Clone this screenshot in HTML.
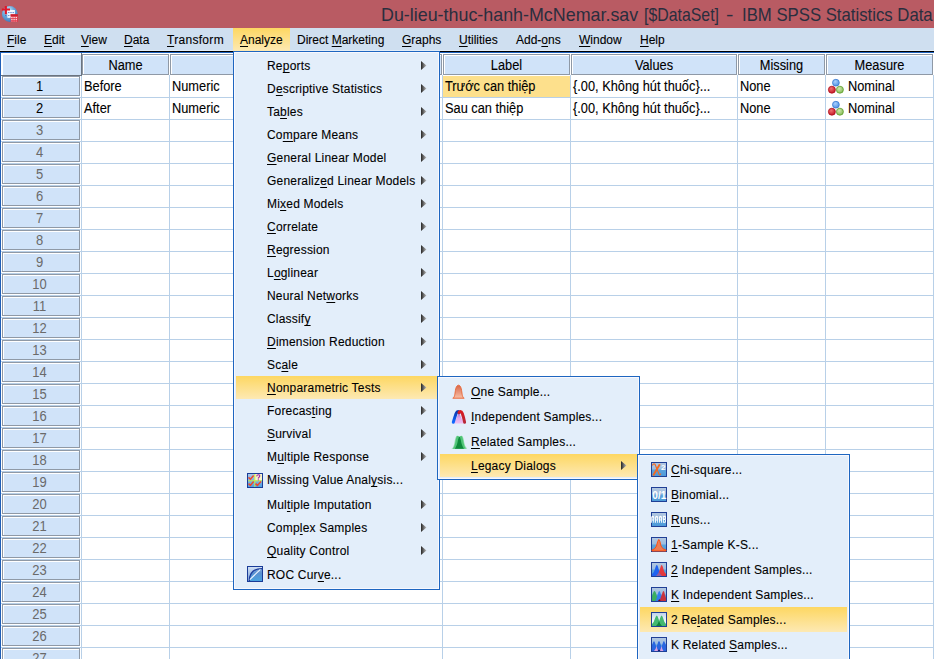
<!DOCTYPE html><html><head><meta charset="utf-8"><style>

*{margin:0;padding:0;box-sizing:border-box}
html,body{width:934px;height:659px;overflow:hidden;background:#fff;font-family:"Liberation Sans", sans-serif;font-size:12px;color:#000}
.abs{position:absolute}
.t{position:absolute;white-space:nowrap;line-height:14px;-webkit-text-stroke:0.1px currentColor}
.d{font-size:12.8px;transform:scaleY(1.1);transform-origin:0 80%}
u{text-decoration:underline;text-decoration-thickness:1px;text-underline-offset:2px}
#title{left:0;top:0;width:934px;height:28px;background:#b95b63}
#menubar{left:0;top:28px;width:934px;height:23px;background:#cfdff0}
.hl{background:linear-gradient(#fdd762,#fde9b3)}
.hdr{position:absolute;background:#d0e3f9;border:1px solid #8f99a6;box-shadow:inset 1px 1px 0 #fff}
.rh{position:absolute;left:2px;width:78px;height:20px;background:#d0e3f9;border:1px solid #8f99a6;box-shadow:inset 1px 1px 0 #fff}
.rn{position:absolute;left:-1px;width:75px;text-align:center;top:3px;line-height:14px;font-size:13px;transform:scaleY(1.12);transform-origin:50% 80%}
.gh{position:absolute;height:1px;background:#b8d0e8}
.gv{position:absolute;width:1px;background:#b8d0e8}
.menu{position:absolute;background:#e3eefa;border:1px solid #1e66c0;box-shadow:inset 1px 1px 0 #f8f8fe,inset -1px -1px 0 #f8f8fe}
.arr{position:absolute;width:5.5px;height:9px;background:linear-gradient(90deg,#262626,#c8c8c8);clip-path:polygon(0 0,100% 50%,0 100%)}

</style></head><body>
<div id="title" class="abs"></div>
<div class="t" style="left:381px;top:4.5px;font-size:18.6px;line-height:20px;color:#2a2e3e;transform-origin:0 0;-webkit-text-stroke:0;transform:scaleX(0.961)">Du-lieu-thuc-hanh-McNemar.sav</div>
<div class="t" style="left:643.5px;top:4.5px;font-size:18.6px;line-height:20px;color:#2a2e3e;transform-origin:0 0;-webkit-text-stroke:0;transform:scaleX(0.853)">[$DataSet]</div>
<div class="t" style="left:725.5px;top:4.5px;font-size:18.6px;line-height:20px;color:#2a2e3e;transform-origin:0 0;-webkit-text-stroke:0;transform:scaleX(1.2)">-</div>
<div class="t" style="left:742px;top:4.5px;font-size:18.6px;line-height:20px;color:#2a2e3e;transform-origin:0 0;-webkit-text-stroke:0;transform:scaleX(0.9)">IBM SPSS Statistics Data</div>
<svg class="abs" style="left:0;top:0" width="20" height="24" viewBox="0 0 20 24">
<defs><radialGradient id="glb" cx="0.4" cy="0.3" r="0.75"><stop offset="0" stop-color="#e0f6ff"/><stop offset="0.5" stop-color="#6aa8dc"/><stop offset="1" stop-color="#3a74b8"/></radialGradient></defs>
<circle cx="9.8" cy="14" r="7.9" fill="url(#glb)"/>
<rect x="7.4" y="10" width="7.5" height="7.8" fill="#f4f8ff"/>
<path d="M8.2 12.6h1.2M10.4 12.6h1.2M12.6 12.6h1.2M5.2 15.6h1.2M8.2 15.6h1.2" stroke="#2a60c0" stroke-width="0.9"/>
<rect x="10.6" y="14.3" width="7.3" height="7.6" fill="#e03a4c"/>
<rect x="10.6" y="14.3" width="7.3" height="1.6" fill="#c8202e"/>
<g fill="#ffe0e4"><rect x="11.2" y="16.9" width="1.4" height="1.1"/><rect x="13.4" y="16.9" width="1.4" height="1.1"/><rect x="15.6" y="16.9" width="1.4" height="1.1"/>
<rect x="11.2" y="18.8" width="1.4" height="1.1"/><rect x="13.4" y="18.8" width="1.4" height="1.1"/><rect x="15.6" y="18.8" width="1.4" height="1.1"/>
<rect x="11.2" y="20.6" width="1.4" height="0.9" opacity="0.6"/><rect x="13.4" y="20.6" width="1.4" height="0.9" opacity="0.6"/><rect x="15.6" y="20.6" width="1.4" height="0.9" opacity="0.6"/></g>
<path d="M5.85 6v8.3M1.9 9.55h8.1" stroke="#e0182a" stroke-width="2.1"/>
</svg>
<div id="menubar" class="abs"></div>
<div class="abs" style="left:0;top:50px;width:934px;height:1px;background:#e2edf8"></div>
<div class="abs hl" style="left:233px;top:28px;width:57px;height:23px"></div>
<div class="t" style="left:7px;top:33px;color:#000"><u>F</u>ile</div>
<div class="t" style="left:44px;top:33px;color:#000"><u>E</u>dit</div>
<div class="t" style="left:81px;top:33px;color:#000"><u>V</u>iew</div>
<div class="t" style="left:124px;top:33px;color:#000"><u>D</u>ata</div>
<div class="t" style="left:167px;top:33px;color:#000;letter-spacing:0.3px"><u>T</u>ransform</div>
<div class="t" style="left:240px;top:33px;color:#000"><u>A</u>nalyze</div>
<div class="t" style="left:297px;top:33px;color:#000">Direct <u>M</u>arketing</div>
<div class="t" style="left:402px;top:33px;color:#000"><u>G</u>raphs</div>
<div class="t" style="left:459px;top:33px;color:#000"><u>U</u>tilities</div>
<div class="t" style="left:516px;top:33px;color:#000">Add-<u>o</u>ns</div>
<div class="t" style="left:579px;top:33px;color:#000"><u>W</u>indow</div>
<div class="t" style="left:640px;top:33px;color:#000"><u>H</u>elp</div>
<div class="abs" style="left:0;top:51px;width:934px;height:1px;background:#000"></div>
<div class="abs" style="left:0;top:52px;width:934px;height:1px;background:#1f64c0"></div>
<div class="abs" style="left:0;top:52px;width:1px;height:607px;background:#1f5fb8"></div>
<div class="abs" style="left:1px;top:53px;width:80px;height:606px;background:#fff"></div>
<div class="gv" style="left:81px;top:75px;height:584px"></div>
<div class="gv" style="left:169px;top:75px;height:584px"></div>
<div class="gv" style="left:442px;top:75px;height:584px"></div>
<div class="gv" style="left:570px;top:75px;height:584px"></div>
<div class="gv" style="left:737px;top:75px;height:584px"></div>
<div class="gv" style="left:825px;top:75px;height:584px"></div>
<div class="gv" style="left:933px;top:75px;height:584px"></div>
<div class="gh" style="left:1px;top:97px;width:933px"></div>
<div class="gh" style="left:1px;top:119px;width:933px"></div>
<div class="gh" style="left:1px;top:141px;width:933px"></div>
<div class="gh" style="left:1px;top:163px;width:933px"></div>
<div class="gh" style="left:1px;top:185px;width:933px"></div>
<div class="gh" style="left:1px;top:207px;width:933px"></div>
<div class="gh" style="left:1px;top:229px;width:933px"></div>
<div class="gh" style="left:1px;top:251px;width:933px"></div>
<div class="gh" style="left:1px;top:273px;width:933px"></div>
<div class="gh" style="left:1px;top:295px;width:933px"></div>
<div class="gh" style="left:1px;top:317px;width:933px"></div>
<div class="gh" style="left:1px;top:339px;width:933px"></div>
<div class="gh" style="left:1px;top:361px;width:933px"></div>
<div class="gh" style="left:1px;top:383px;width:933px"></div>
<div class="gh" style="left:1px;top:405px;width:933px"></div>
<div class="gh" style="left:1px;top:427px;width:933px"></div>
<div class="gh" style="left:1px;top:449px;width:933px"></div>
<div class="gh" style="left:1px;top:471px;width:933px"></div>
<div class="gh" style="left:1px;top:493px;width:933px"></div>
<div class="gh" style="left:1px;top:515px;width:933px"></div>
<div class="gh" style="left:1px;top:537px;width:933px"></div>
<div class="gh" style="left:1px;top:559px;width:933px"></div>
<div class="gh" style="left:1px;top:581px;width:933px"></div>
<div class="gh" style="left:1px;top:603px;width:933px"></div>
<div class="gh" style="left:1px;top:625px;width:933px"></div>
<div class="gh" style="left:1px;top:647px;width:933px"></div>
<div class="gh" style="left:1px;top:669px;width:933px"></div>
<div class="gh" style="left:1px;top:691px;width:933px"></div>
<div class="abs" style="left:1px;top:53px;width:81px;height:23px;background:#d0e3f9;border-right:1px solid #6b7480;border-bottom:1px solid #6b7480;box-shadow:inset 2px 2px 0 #fff"></div>
<div class="hdr" style="left:82px;top:54px;width:87px;height:21px"><div class="t d" style="left:0;width:85px;text-align:center;top:4px">Name</div></div>
<div class="hdr" style="left:170px;top:54px;width:272px;height:21px"><div class="t d" style="left:0;width:270px;text-align:center;top:4px"></div></div>
<div class="hdr" style="left:443px;top:54px;width:127px;height:21px"><div class="t d" style="left:0;width:125px;text-align:center;top:4px">Label</div></div>
<div class="hdr" style="left:571px;top:54px;width:166px;height:21px"><div class="t d" style="left:0;width:164px;text-align:center;top:4px">Values</div></div>
<div class="hdr" style="left:738px;top:54px;width:87px;height:21px"><div class="t d" style="left:0;width:85px;text-align:center;top:4px">Missing</div></div>
<div class="hdr" style="left:826px;top:54px;width:107px;height:21px"><div class="t d" style="left:0;width:105px;text-align:center;top:4px">Measure</div></div>
<div class="rh" style="top:76px"><div class="rn" style="color:#000">1</div></div>
<div class="rh" style="top:98px"><div class="rn" style="color:#000">2</div></div>
<div class="rh" style="top:120px"><div class="rn" style="color:#6a6a6a">3</div></div>
<div class="rh" style="top:142px"><div class="rn" style="color:#6a6a6a">4</div></div>
<div class="rh" style="top:164px"><div class="rn" style="color:#6a6a6a">5</div></div>
<div class="rh" style="top:186px"><div class="rn" style="color:#6a6a6a">6</div></div>
<div class="rh" style="top:208px"><div class="rn" style="color:#6a6a6a">7</div></div>
<div class="rh" style="top:230px"><div class="rn" style="color:#6a6a6a">8</div></div>
<div class="rh" style="top:252px"><div class="rn" style="color:#6a6a6a">9</div></div>
<div class="rh" style="top:274px"><div class="rn" style="color:#6a6a6a">10</div></div>
<div class="rh" style="top:296px"><div class="rn" style="color:#6a6a6a">11</div></div>
<div class="rh" style="top:318px"><div class="rn" style="color:#6a6a6a">12</div></div>
<div class="rh" style="top:340px"><div class="rn" style="color:#6a6a6a">13</div></div>
<div class="rh" style="top:362px"><div class="rn" style="color:#6a6a6a">14</div></div>
<div class="rh" style="top:384px"><div class="rn" style="color:#6a6a6a">15</div></div>
<div class="rh" style="top:406px"><div class="rn" style="color:#6a6a6a">16</div></div>
<div class="rh" style="top:428px"><div class="rn" style="color:#6a6a6a">17</div></div>
<div class="rh" style="top:450px"><div class="rn" style="color:#6a6a6a">18</div></div>
<div class="rh" style="top:472px"><div class="rn" style="color:#6a6a6a">19</div></div>
<div class="rh" style="top:494px"><div class="rn" style="color:#6a6a6a">20</div></div>
<div class="rh" style="top:516px"><div class="rn" style="color:#6a6a6a">21</div></div>
<div class="rh" style="top:538px"><div class="rn" style="color:#6a6a6a">22</div></div>
<div class="rh" style="top:560px"><div class="rn" style="color:#6a6a6a">23</div></div>
<div class="rh" style="top:582px"><div class="rn" style="color:#6a6a6a">24</div></div>
<div class="rh" style="top:604px"><div class="rn" style="color:#6a6a6a">25</div></div>
<div class="rh" style="top:626px"><div class="rn" style="color:#6a6a6a">26</div></div>
<div class="rh" style="top:648px"><div class="rn" style="color:#6a6a6a">27</div></div>
<div class="abs" style="left:443px;top:76px;width:127px;height:21px;background:#fde08c"></div>
<div class="t d" style="left:84px;top:80px">Before</div>
<div class="t d" style="left:172px;top:80px">Numeric</div>
<div class="t d" style="left:445px;top:80px">Trước can thiệp</div>
<div class="t d" style="left:573px;top:80px">{.00, Không hút thuốc}...</div>
<div class="t d" style="left:740px;top:80px">None</div>
<svg class="abs" style="left:827px;top:78px" width="18" height="16" viewBox="0 0 18 16">
<defs>
<radialGradient id="nb1" cx="0.4" cy="0.35" r="0.7"><stop offset="0" stop-color="#a8d0ff"/><stop offset="1" stop-color="#4a8ee0"/></radialGradient>
<radialGradient id="nr1" cx="0.4" cy="0.35" r="0.7"><stop offset="0" stop-color="#f07070"/><stop offset="1" stop-color="#c01020"/></radialGradient>
<radialGradient id="ng1" cx="0.4" cy="0.35" r="0.7"><stop offset="0" stop-color="#d0e8b0"/><stop offset="1" stop-color="#80b850"/></radialGradient>
</defs>
<circle cx="8.9" cy="4.7" r="3.4" fill="url(#nb1)" stroke="#3a7ad0" stroke-width="0.8"/>
<circle cx="4.9" cy="11.7" r="3.5" fill="url(#nr1)" stroke="#b01020" stroke-width="0.8"/>
<circle cx="12.9" cy="11.7" r="3.5" fill="url(#ng1)" stroke="#60a030" stroke-width="0.8"/>
</svg>
<div class="t d" style="left:848px;top:80px">Nominal</div>
<div class="t d" style="left:84px;top:102px">After</div>
<div class="t d" style="left:172px;top:102px">Numeric</div>
<div class="t d" style="left:445px;top:102px">Sau can thiệp</div>
<div class="t d" style="left:573px;top:102px">{.00, Không hút thuốc}...</div>
<div class="t d" style="left:740px;top:102px">None</div>
<svg class="abs" style="left:827px;top:100px" width="18" height="16" viewBox="0 0 18 16">
<defs>
<radialGradient id="nb2" cx="0.4" cy="0.35" r="0.7"><stop offset="0" stop-color="#a8d0ff"/><stop offset="1" stop-color="#4a8ee0"/></radialGradient>
<radialGradient id="nr2" cx="0.4" cy="0.35" r="0.7"><stop offset="0" stop-color="#f07070"/><stop offset="1" stop-color="#c01020"/></radialGradient>
<radialGradient id="ng2" cx="0.4" cy="0.35" r="0.7"><stop offset="0" stop-color="#d0e8b0"/><stop offset="1" stop-color="#80b850"/></radialGradient>
</defs>
<circle cx="8.9" cy="4.7" r="3.4" fill="url(#nb2)" stroke="#3a7ad0" stroke-width="0.8"/>
<circle cx="4.9" cy="11.7" r="3.5" fill="url(#nr2)" stroke="#b01020" stroke-width="0.8"/>
<circle cx="12.9" cy="11.7" r="3.5" fill="url(#ng2)" stroke="#60a030" stroke-width="0.8"/>
</svg>
<div class="t d" style="left:848px;top:102px">Nominal</div>
<div class="menu" style="left:233px;top:51px;width:207px;height:539px"></div>
<div class="t" style="left:267px;top:59px;color:#000;letter-spacing:0.2px">Re<u>p</u>orts</div>
<div class="arr" style="left:421px;top:61px"></div>
<div class="t" style="left:267px;top:82px;color:#000;letter-spacing:0.2px">D<u>e</u>scriptive Statistics</div>
<div class="arr" style="left:421px;top:84px"></div>
<div class="t" style="left:267px;top:105px;color:#000;letter-spacing:0.2px">Ta<u>b</u>les</div>
<div class="arr" style="left:421px;top:107px"></div>
<div class="t" style="left:267px;top:128px;color:#000;letter-spacing:0.2px">Co<u>m</u>pare Means</div>
<div class="arr" style="left:421px;top:130px"></div>
<div class="t" style="left:267px;top:151px;color:#000;letter-spacing:0.2px"><u>G</u>eneral Linear Model</div>
<div class="arr" style="left:421px;top:153px"></div>
<div class="t" style="left:267px;top:174px;color:#000;letter-spacing:0.2px">Generaliz<u>e</u>d Linear Models</div>
<div class="arr" style="left:421px;top:176px"></div>
<div class="t" style="left:267px;top:197px;color:#000;letter-spacing:0.2px">Mi<u>x</u>ed Models</div>
<div class="arr" style="left:421px;top:199px"></div>
<div class="t" style="left:267px;top:220px;color:#000;letter-spacing:0.2px"><u>C</u>orrelate</div>
<div class="arr" style="left:421px;top:222px"></div>
<div class="t" style="left:267px;top:243px;color:#000;letter-spacing:0.2px"><u>R</u>egression</div>
<div class="arr" style="left:421px;top:245px"></div>
<div class="t" style="left:267px;top:266px;color:#000;letter-spacing:0.2px">L<u>o</u>glinear</div>
<div class="arr" style="left:421px;top:268px"></div>
<div class="t" style="left:267px;top:289px;color:#000;letter-spacing:0.2px">Neural Net<u>w</u>orks</div>
<div class="arr" style="left:421px;top:291px"></div>
<div class="t" style="left:267px;top:312px;color:#000;letter-spacing:0.2px">Classif<u>y</u></div>
<div class="arr" style="left:421px;top:314px"></div>
<div class="t" style="left:267px;top:335px;color:#000;letter-spacing:0.2px"><u>D</u>imension Reduction</div>
<div class="arr" style="left:421px;top:337px"></div>
<div class="t" style="left:267px;top:358px;color:#000;letter-spacing:0.2px">Sc<u>a</u>le</div>
<div class="arr" style="left:421px;top:360px"></div>
<div class="abs hl" style="left:236px;top:376px;width:202px;height:23px"></div>
<div class="t" style="left:267px;top:381px;color:#000;letter-spacing:0.2px"><u>N</u>onparametric Tests</div>
<div class="arr" style="left:421px;top:383px"></div>
<div class="t" style="left:267px;top:404px;color:#000;letter-spacing:0.2px">Forecas<u>t</u>ing</div>
<div class="arr" style="left:421px;top:406px"></div>
<div class="t" style="left:267px;top:427px;color:#000;letter-spacing:0.2px"><u>S</u>urvival</div>
<div class="arr" style="left:421px;top:429px"></div>
<div class="t" style="left:267px;top:450px;color:#000;letter-spacing:0.2px">M<u>u</u>ltiple Response</div>
<div class="arr" style="left:421px;top:452px"></div>
<div class="t" style="left:267px;top:473px;color:#000;letter-spacing:0.2px">Missing Value Anal<u>y</u>sis...</div>
<svg class="abs" style="left:247px;top:473px" width="16" height="15" viewBox="0 0 16 15">
<defs><linearGradient id="mvg" x1="0" y1="0" x2="0" y2="1"><stop offset="0" stop-color="#b0c8e8"/><stop offset="1" stop-color="#4a9ee0"/></linearGradient></defs>
<rect x="0.5" y="0.5" width="15" height="14" fill="url(#mvg)" stroke="#1a3c98"/>
<rect x="7.5" y="1" width="7.5" height="6.5" fill="#f8f6c8"/>
<path d="M1 7.8h14M7.8 1v13" stroke="#c8f040" stroke-width="1"/>
<path d="M1.5 4.4 L3.4 6.2 L6.6 2.4 M1.5 10.6 L3.4 12.4 L6.6 8.6 M8.5 10.6 L10.4 12.4 L14 8.6" stroke="#f04a28" stroke-width="1.5" fill="none"/>
<path d="M9.6 3.3 Q10 1.6 11.5 1.7 Q13 1.9 12.7 3.3 Q12.3 4.3 11.4 4.9 L11.3 5.6" stroke="#a020b0" stroke-width="1.1" fill="none"/>
<circle cx="11.3" cy="6.8" r="0.65" fill="#a020b0"/>
</svg>
<div class="t" style="left:267px;top:498px;color:#000;letter-spacing:0.2px">Mul<u>t</u>iple Imputation</div>
<div class="arr" style="left:421px;top:500px"></div>
<div class="t" style="left:267px;top:521px;color:#000;letter-spacing:0.2px">Comp<u>l</u>ex Samples</div>
<div class="arr" style="left:421px;top:523px"></div>
<div class="t" style="left:267px;top:544px;color:#000;letter-spacing:0.2px"><u>Q</u>uality Control</div>
<div class="arr" style="left:421px;top:546px"></div>
<div class="t" style="left:267px;top:568px;color:#000;letter-spacing:0.2px">ROC Cur<u>v</u>e...</div>
<svg class="abs" style="left:247px;top:566px" width="16" height="16" viewBox="0 0 16 16">
<defs><linearGradient id="rocg" x1="0" y1="0" x2="0" y2="1"><stop offset="0" stop-color="#90b4e0"/><stop offset="0.45" stop-color="#5890d0"/><stop offset="1" stop-color="#48a4e0"/></linearGradient>
<linearGradient id="rocl" x1="0" y1="0" x2="0" y2="1"><stop offset="0" stop-color="#d0e0f4"/><stop offset="1" stop-color="#7aa0d8"/></linearGradient></defs>
<rect x="0.5" y="0.5" width="15" height="15" fill="url(#rocg)" stroke="#1a3c98"/>
<path d="M1 1 H15 V2.6 Q2.4 2.6 2.4 15 H1Z" fill="url(#rocl)"/>
<path d="M2.4 15 Q2.4 2.6 15 2.6" stroke="#1c3c9c" stroke-width="1.3" fill="none"/>
<path d="M2.8 13.6 L13.4 3.4" stroke="#eef4ff" stroke-width="1.1" fill="none"/>
</svg>
<div class="menu" style="left:437px;top:376px;width:203px;height:104px"></div>
<div class="t" style="left:471px;top:385px;color:#000;letter-spacing:0.2px"><u>O</u>ne Sample...</div>
<div class="t" style="left:471px;top:410px;color:#000;letter-spacing:0.2px"><u>I</u>ndependent Samples...</div>
<div class="t" style="left:471px;top:435px;color:#000;letter-spacing:0.2px"><u>R</u>elated Samples...</div>
<div class="abs hl" style="left:440px;top:454px;width:197px;height:23px"></div>
<div class="arr" style="left:621px;top:461px"></div>
<div class="t" style="left:471px;top:459px;color:#000;letter-spacing:0.2px"><u>L</u>egacy Dialogs</div>
<svg class="abs" style="left:452px;top:384px" width="14" height="15" viewBox="0 0 14 15">
<defs><linearGradient id="os" x1="0" y1="0" x2="0" y2="1"><stop offset="0" stop-color="#d86648"/><stop offset="1" stop-color="#f8c0a8"/></linearGradient></defs>
<path d="M0.8 14.2 C2.6 13.8 2.9 10 3.4 6.6 C3.9 3 5 1.2 6.5 1.2 C8 1.2 9.1 3 9.6 6.6 C10.1 10 10.4 13.8 12.2 14.2 Z" fill="url(#os)" stroke="#ea6a3c" stroke-width="1"/>
</svg>
<svg class="abs" style="left:451px;top:410px" width="16" height="15" viewBox="0 0 16 15">
<defs><linearGradient id="ipk" x1="0" y1="0" x2="0" y2="1"><stop offset="0" stop-color="#a060c8"/><stop offset="0.5" stop-color="#e0a8ec"/><stop offset="1" stop-color="#f0c0f0"/></linearGradient>
<linearGradient id="ibl" x1="0" y1="0" x2="0" y2="1"><stop offset="0" stop-color="#0a38b0"/><stop offset="1" stop-color="#1068ff"/></linearGradient>
<linearGradient id="ird" x1="0" y1="0" x2="0" y2="1"><stop offset="0" stop-color="#d81c24"/><stop offset="1" stop-color="#b82838"/></linearGradient></defs>
<path d="M3 13.6 Q5.5 8 7.9 2.5 Q10.3 8 13 13.6Z" fill="url(#ipk)"/>
<path d="M2.3 12.2 Q3.9 7 5.1 3.6 Q5.9 1.6 7.1 1.6 Q7.7 1.6 8 2.6" stroke="url(#ibl)" stroke-width="3" fill="none" stroke-linecap="round"/>
<path d="M8 2.6 Q8.4 1.6 9.3 1.6 Q10.6 1.6 11.3 3.6 Q12.5 7 13.6 12.2" stroke="url(#ird)" stroke-width="3" fill="none" stroke-linecap="round"/>
</svg>
<svg class="abs" style="left:451px;top:435px" width="17" height="14" viewBox="0 0 17 14">
<path d="M0.3 13.8 Q2.5 13 3.4 8 Q4.4 1.2 6 0.8 Q7.5 0.6 8.4 1.8 Q9.3 0.6 10.8 0.8 Q12.4 1.2 13.3 8 Q14 12 16.2 13.8 Z" fill="#90dcaa"/>
<path d="M1.6 13.8 Q3.6 12 4.4 7 Q5.3 1.5 6.3 1.1 Q7.6 1.1 8.4 2.4 Q9.2 1.1 10.5 1.1 Q11.5 1.5 12.4 7 Q13.2 12 14.8 13.8Z" fill="#50c478"/>
<path d="M3.8 13.8 Q6 11 7 5 Q7.8 1.5 8.4 1.5 Q9 1.5 9.8 5 Q10.8 11 13 13.8Z" fill="#0e8a3c"/>
</svg>
<div class="menu" style="left:637px;top:454px;width:213px;height:210px"></div>
<div class="t" style="left:671px;top:463px;color:#000;letter-spacing:0.2px"><u>C</u>hi-square...</div>
<svg class="abs" style="left:651px;top:462px" width="16" height="15" viewBox="0 0 16 15">
<defs><linearGradient id="gchi" x1="0" y1="0" x2="0" y2="1"><stop offset="0" stop-color="#b4c8e0"/><stop offset="0.45" stop-color="#9cbde0"/><stop offset="0.55" stop-color="#5aa2dc"/><stop offset="1" stop-color="#4c9ad8"/></linearGradient></defs>
<rect x="0.5" y="0.5" width="15" height="14" fill="url(#gchi)" stroke="#1f3f96" stroke-width="1"/>
<path d="M1.3 3.4 Q2.6 1.1 4 2.2 L8 12.3 Q8.9 13.8 9.9 11.6" stroke="#f06a24" stroke-width="1.1" fill="none"/>
<path d="M2.2 13.4 L8.8 2.2" stroke="#f26a22" stroke-width="1.9" fill="none"/>
<text x="12.2" y="8" fill="#fff" font-family="Liberation Sans" font-weight="bold" font-size="8" text-anchor="middle">2</text></svg>
<div class="t" style="left:671px;top:488px;color:#000;letter-spacing:0.2px"><u>B</u>inomial...</div>
<svg class="abs" style="left:651px;top:487px" width="16" height="15" viewBox="0 0 16 15">
<defs><linearGradient id="gbin" x1="0" y1="0" x2="0" y2="1"><stop offset="0" stop-color="#b4c8e0"/><stop offset="0.45" stop-color="#9cbde0"/><stop offset="0.55" stop-color="#5aa2dc"/><stop offset="1" stop-color="#4c9ad8"/></linearGradient></defs>
<rect x="0.5" y="0.5" width="15" height="14" fill="url(#gbin)" stroke="#1f3f96" stroke-width="1"/>
<text x="8.3" y="11.8" fill="#fff" font-family="Liberation Sans" font-weight="bold" font-size="10.5" text-anchor="middle" textLength="14" lengthAdjust="spacingAndGlyphs">0/1</text></svg>
<div class="t" style="left:671px;top:513px;color:#000;letter-spacing:0.2px"><u>R</u>uns...</div>
<svg class="abs" style="left:651px;top:512px" width="16" height="15" viewBox="0 0 16 15">
<defs><linearGradient id="gruns" x1="0" y1="0" x2="0" y2="1"><stop offset="0" stop-color="#b4c8e0"/><stop offset="0.45" stop-color="#9cbde0"/><stop offset="0.55" stop-color="#5aa2dc"/><stop offset="1" stop-color="#4c9ad8"/></linearGradient></defs>
<rect x="0.5" y="0.5" width="15" height="14" fill="url(#gruns)" stroke="#1f3f96" stroke-width="1"/>
<path fill="#fff" fill-rule="evenodd" d="M0.2 10.8 V5.3 Q0.2 3.8 1.7 3.8 Q3.2 3.8 3.2 5.3 V10.8 H2.3 V8.6 H1.1 V10.8 Z M1.1 5.6 H2.3 V7.4 H1.1 Z M4.1 10.8 V5.3 Q4.1 3.8 5.6 3.8 Q7.1 3.8 7.1 5.3 V10.8 H6.2 V8.6 H5.0 V10.8 Z M5.0 5.6 H6.2 V7.4 H5.0 Z M8.0 10.8 V5.3 Q8.0 3.8 9.5 3.8 Q11.0 3.8 11.0 5.3 V10.8 H10.1 V8.6 H8.9 V10.8 Z M8.9 5.6 H10.1 V7.4 H8.9 Z M11.9 3.8 H14.1 Q14.9 3.8 14.9 5 V6.6 Q14.9 7.3 14.4 7.3 Q14.9 7.3 14.9 8.2 V9.8 Q14.9 10.8 14.1 10.8 H11.9 Z M12.8 4.9 H14.0 V6.7 H12.8 Z M12.8 7.9 H14.0 V9.7 H12.8 Z "/></svg>
<div class="t" style="left:671px;top:538px;color:#000;letter-spacing:0.2px"><u>1</u>-Sample K-S...</div>
<svg class="abs" style="left:651px;top:537px" width="16" height="15" viewBox="0 0 16 15">
<defs><linearGradient id="gks" x1="0" y1="0" x2="0" y2="1"><stop offset="0" stop-color="#b4c8e0"/><stop offset="0.45" stop-color="#9cbde0"/><stop offset="0.55" stop-color="#5aa2dc"/><stop offset="1" stop-color="#4c9ad8"/></linearGradient></defs>
<rect x="0.5" y="0.5" width="15" height="14" fill="url(#gks)" stroke="#1f3f96" stroke-width="1"/>
<defs><linearGradient id="ork" x1="0" y1="0" x2="0" y2="1"><stop offset="0" stop-color="#e88060"/><stop offset="1" stop-color="#f07a50"/></linearGradient></defs>
<path d="M1 14 L1 13 Q4 12.5 5.5 9 Q6.8 3 7.8 2.5 Q8.8 3 10 9 Q11.5 12.5 15 13 L15 14 Z" fill="url(#ork)" stroke="#ff5010" stroke-width="1"/></svg>
<div class="t" style="left:671px;top:563px;color:#000;letter-spacing:0.2px"><u>2</u> Independent Samples...</div>
<svg class="abs" style="left:651px;top:562px" width="16" height="15" viewBox="0 0 16 15">
<defs><linearGradient id="gi2" x1="0" y1="0" x2="0" y2="1"><stop offset="0" stop-color="#b4c8e0"/><stop offset="0.45" stop-color="#9cbde0"/><stop offset="0.55" stop-color="#5aa2dc"/><stop offset="1" stop-color="#4c9ad8"/></linearGradient></defs>
<rect x="0.5" y="0.5" width="15" height="14" fill="url(#gi2)" stroke="#1f3f96" stroke-width="1"/>
<path d="M1 14 L1 12 Q3 11 4 7 Q5 3 5.8 3 Q6.6 3 7.6 7 Q8.6 11 10 12 L10 14Z" fill="#1f62f0"/>
<path d="M6 14 Q8 11 9 7 Q10 3 10.6 3 Q11.4 3 12.4 7 Q13.4 11 15 12 L15 14Z" fill="#f03030" opacity="0.92"/>
<path d="M5 14 Q7 12 8 10 Q9 12 11 14Z" fill="#9060a0"/></svg>
<div class="t" style="left:671px;top:588px;color:#000;letter-spacing:0.2px"><u>K</u> Independent Samples...</div>
<svg class="abs" style="left:651px;top:587px" width="16" height="15" viewBox="0 0 16 15">
<defs><linearGradient id="gik" x1="0" y1="0" x2="0" y2="1"><stop offset="0" stop-color="#b4c8e0"/><stop offset="0.45" stop-color="#9cbde0"/><stop offset="0.55" stop-color="#5aa2dc"/><stop offset="1" stop-color="#4c9ad8"/></linearGradient></defs>
<rect x="0.5" y="0.5" width="15" height="14" fill="url(#gik)" stroke="#1f3f96" stroke-width="1"/>
<path d="M1 14 L1 9 Q2.5 4 3.5 4 Q4.5 4 5.5 8 Q6.5 12 8 14Z" fill="#3cae60"/>
<path d="M4.5 14 Q6 10 6.8 7 Q7.6 4 8.3 4 Q9 4 9.8 7 Q10.6 10 12 14Z" fill="#2f7af0" opacity="0.92"/>
<path d="M8.5 14 Q10 10 11 7 Q11.8 4 12.5 4 Q13.2 4 14 8 L15 11 L15 14Z" fill="#d02a30" opacity="0.92"/>
<path d="M7 14 L8.3 12 L9.6 14Z" fill="#800010"/></svg>
<div class="abs hl" style="left:640px;top:607px;width:207px;height:25px"></div>
<div class="t" style="left:671px;top:613px;color:#000;letter-spacing:0.2px">2 Re<u>l</u>ated Samples...</div>
<svg class="abs" style="left:651px;top:612px" width="16" height="15" viewBox="0 0 16 15">
<defs><linearGradient id="gr2" x1="0" y1="0" x2="0" y2="1"><stop offset="0" stop-color="#b4c8e0"/><stop offset="0.45" stop-color="#9cbde0"/><stop offset="0.55" stop-color="#5aa2dc"/><stop offset="1" stop-color="#4c9ad8"/></linearGradient></defs>
<rect x="0.5" y="0.5" width="15" height="14" fill="url(#gr2)" stroke="#1f3f96" stroke-width="1"/>
<defs><linearGradient id="wbg" x1="0" y1="0" x2="0" y2="1"><stop offset="0" stop-color="#c0d4ea"/><stop offset="0.6" stop-color="#f0f6fb"/><stop offset="1" stop-color="#ffffff"/></linearGradient></defs>
<rect x="1" y="1" width="14" height="13" fill="url(#wbg)"/>
<path d="M1 14 L1 12 Q3 10 4 6.5 Q5 3.5 5.8 3.5 Q6.6 3.5 7.6 7 Q8.5 10 9 11 L9 14Z" fill="#44b870"/>
<path d="M7 14 L7 11 Q8 10 9 6.5 Q10 3.5 10.6 3.5 Q11.4 3.5 12.4 7 Q13.4 11 15 12 L15 14Z" fill="#44b870"/>
<path d="M5 14 Q7 12 8 9 Q9 12 11 14Z" fill="#10843c"/></svg>
<div class="t" style="left:671px;top:638px;color:#000;letter-spacing:0.2px">K Related <u>S</u>amples...</div>
<svg class="abs" style="left:651px;top:637px" width="16" height="15" viewBox="0 0 16 15">
<defs><linearGradient id="grk" x1="0" y1="0" x2="0" y2="1"><stop offset="0" stop-color="#b4c8e0"/><stop offset="0.45" stop-color="#9cbde0"/><stop offset="0.55" stop-color="#5aa2dc"/><stop offset="1" stop-color="#4c9ad8"/></linearGradient></defs>
<rect x="0.5" y="0.5" width="15" height="14" fill="url(#grk)" stroke="#1f3f96" stroke-width="1"/>
<path d="M1 14 L1 8 Q2 5 3 4 Q4 5 5 9 Q6 12 7 14Z" fill="#2a66e0"/>
<path d="M4 14 Q5.5 11 6.5 7 Q7.3 4 8 4 Q8.7 4 9.5 7 Q10.5 11 12 14Z" fill="#2a66e0"/>
<path d="M9 14 Q10.5 11 11.5 7 Q12.3 4 13 4 L15 8 L15 14Z" fill="#2a66e0"/>
<path d="M3 14 Q5 12 5.5 9 Q6 12 7.5 14Z M8.5 14 Q10 12 10.5 9 Q11 12 12.5 14Z" fill="#d8a0e0"/>
<path d="M6.5 14 L8 12.5 L9.5 14Z" fill="#101060"/></svg>
</body></html>
